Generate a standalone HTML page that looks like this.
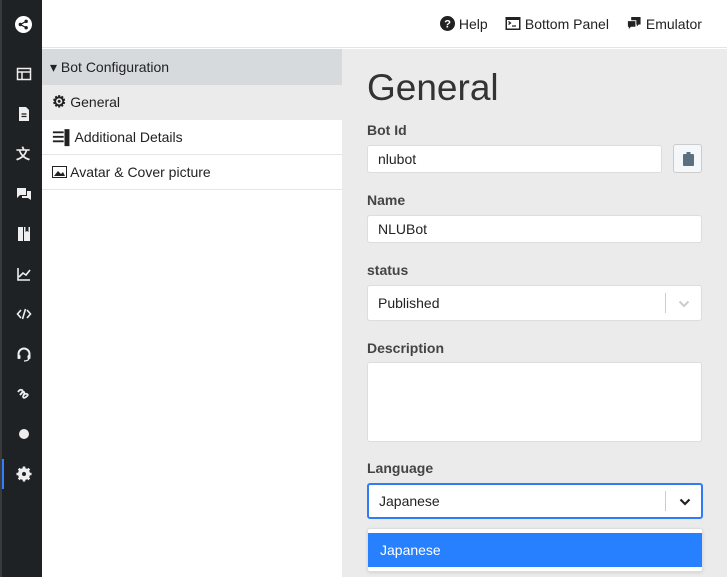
<!DOCTYPE html>
<html><head><style>
*{box-sizing:border-box;margin:0;padding:0}
body{width:727px;height:577px;overflow:hidden;font-family:"Liberation Sans",sans-serif;background:#fff;position:relative;color:#333}
.sb{position:absolute;left:0;top:0;width:42px;height:577px;background:#1f2225;border-left:2px solid #3a3a3a}
.ic{position:absolute;left:14px;width:16px;height:16px;color:#eee}
.top{position:absolute;left:42px;top:0;right:0;height:48px;background:#fff;border-bottom:1px solid #e4e4e4}
.tb{position:absolute;top:16px;font-size:14px;color:#222}
.lp{position:absolute;left:42px;top:49px;width:300px;bottom:0;background:#fff}
.row{height:35px;border-bottom:1px solid #e5e5e5;font-size:14px;line-height:34px;padding-left:10px;color:#222}
.rp{position:absolute;left:342px;top:49px;right:0;bottom:0;background:#ebebeb}
.lab{position:absolute;left:25px;font-size:14px;font-weight:bold;color:#444}
.inp{position:absolute;left:25px;background:#fff;border:1px solid #ddd;border-radius:3px;font-size:14px;padding-left:10px;color:#222}
</style></head><body>
<div class="sb">
<svg class="ic" style="top:16px;left:13px;width:17px;height:17px" viewBox="0 0 16 16"><circle cx="8" cy="8" r="8" fill="#fff"/><circle cx="5" cy="8" r="1.6" fill="#1f2225"/><circle cx="10.5" cy="5" r="1.6" fill="#1f2225"/><circle cx="10.5" cy="11" r="1.6" fill="#1f2225"/><path d="M5 8L10.5 5M5 8l5.5 3" stroke="#1f2225" stroke-width="1.2"/></svg>
<svg class="ic" style="top:66px" viewBox="0 0 16 16"><rect x="1.5" y="2.5" width="13" height="11" fill="none" stroke="#eee" stroke-width="1.5"/><path d="M1.5 6h13M6 6v7.5" stroke="#eee" stroke-width="1.5"/></svg>
<svg class="ic" style="top:106px" viewBox="0 0 16 16"><path d="M3 1h7l3 3v11H3z" fill="#eee"/><path d="M5.5 8h5M5.5 10.5h5" stroke="#1f2225" stroke-width="1.2"/></svg>
<div class="ic" style="top:144px;font-size:14px;font-weight:bold">文</div>
<svg class="ic" style="top:186px" viewBox="0 0 16 16"><path d="M1 2h9v7H4l-3 3z" fill="#eee"/><path d="M11 5h4v9l-3-2H6v-2h5z" fill="#eee"/></svg>
<svg class="ic" style="top:226px" viewBox="0 0 16 16"><rect x="2" y="1" width="5" height="14" fill="#eee"/><rect x="8" y="1" width="6" height="14" fill="#eee"/><path d="M9.5 1v5l1.5-1 1.5 1V1" fill="#1f2225"/></svg>
<svg class="ic" style="top:266px" viewBox="0 0 16 16"><path d="M2 2v12h12M3 11l4-4 3 2 4-5" fill="none" stroke="#eee" stroke-width="1.6"/></svg>
<svg class="ic" style="top:306px" viewBox="0 0 16 16"><path d="M5 4L1.5 8 5 12M11 4l3.5 4L11 12M9.5 3l-3 10" fill="none" stroke="#eee" stroke-width="1.6"/></svg>
<svg class="ic" style="top:346px" viewBox="0 0 16 16"><path d="M2.5 10V8a5.5 5.5 0 0 1 11 0v2" fill="none" stroke="#eee" stroke-width="2"/><rect x="1.5" y="9" width="3" height="4" rx="1" fill="#eee"/><rect x="11.5" y="9" width="3" height="4" rx="1" fill="#eee"/><path d="M13 12q0 3-5 3" fill="none" stroke="#eee" stroke-width="1.3"/></svg>
<svg class="ic" style="top:386px" viewBox="0 0 16 16"><path d="M2 6q2-3 4-2t-2 5q3-4 4-3t-1 4q2-3 4-2t-1 3-3-1" fill="none" stroke="#eee" stroke-width="1.8"/></svg>
<svg class="ic" style="top:426px" viewBox="0 0 16 16"><circle cx="8" cy="8" r="5" fill="#eee"/></svg>
<div style="position:absolute;left:0;top:459px;width:2px;height:30px;background:#2f7fff"></div>
<svg class="ic" style="top:466px" viewBox="0 0 16 16"><circle cx="8" cy="8" r="4.5" fill="none" stroke="#eee" stroke-width="3"/><path d="M8 0.5v15M0.5 8h15M2.7 2.7l10.6 10.6M13.3 2.7L2.7 13.3" stroke="#eee" stroke-width="2.6"/><circle cx="8" cy="8" r="2" fill="#1f2225"/></svg>
</div>
<div class="top">
<span class="tb" style="left:398px"><svg width="15" height="15" viewBox="0 0 16 16" style="vertical-align:-2px"><circle cx="8" cy="8" r="8" fill="#222"/><text x="8" y="12.5" font-size="12" font-weight="bold" fill="#fff" text-anchor="middle" font-family="Liberation Sans">?</text></svg> Help</span>
<span class="tb" style="left:463px"><svg width="16" height="15" viewBox="0 0 16 15" style="vertical-align:-2px"><rect x="0.5" y="1" width="15" height="13" fill="#222"/><rect x="2" y="4" width="12" height="8.5" fill="#fff"/><path d="M3.5 5.5l2 1.5-2 1.5M7 10h4" stroke="#222" stroke-width="1.3" fill="none"/></svg> Bottom Panel</span>
<span class="tb" style="left:584px"><svg width="16" height="15" viewBox="0 0 16 16" style="vertical-align:-2px"><path d="M5 1h10v8h-2l-2 2V9H5z" fill="#222"/><path d="M1 5h9v7H5l-3 3v-3H1z" fill="#222" stroke="#fff" stroke-width="1"/></svg> Emulator</span>
</div>
<div class="lp">
<div class="row" style="background:#d7dadd;line-height:36px;height:36px;border:0;padding-left:8px">▾ Bot Configuration</div>
<div class="row" style="background:#ebebeb;border-bottom:0;padding-left:10px"><span style="font-size:16px;font-weight:bold">⚙</span> General</div>
<div class="row"><span style="font-weight:bold">☰▌</span>Additional Details</div>
<div class="row"><svg width="15" height="12" viewBox="0 0 15 12" style="vertical-align:-1px"><rect x="0.5" y="0.5" width="14" height="11" fill="none" stroke="#222"/><path d="M2 10l4-5 3 3 2-2 2 4z" fill="#222"/></svg> Avatar &amp; Cover picture</div>
</div>
<div class="rp">
<div style="position:absolute;left:25px;top:18px;font-size:37px;color:#333">General</div>
<div class="lab" style="top:73px">Bot Id</div>
<div class="inp" style="top:96px;width:295px;height:28px;line-height:26px">nlubot</div>
<div style="position:absolute;left:331px;top:95px;width:29px;height:29px;background:#f5f8fa;border:1px solid #ccc;border-radius:3px"><svg width="11" height="14" viewBox="0 0 11 14" style="position:absolute;left:9px;top:7px"><rect x="0" y="2" width="11" height="12" rx="1" fill="#5c7080"/><rect x="3.5" y="0" width="4" height="3" fill="#5c7080"/></svg></div>
<div class="lab" style="top:143px">Name</div>
<div class="inp" style="top:166px;width:335px;height:28px;line-height:26px">NLUBot</div>
<div class="lab" style="top:213px">status</div>
<div class="inp" style="top:236px;width:335px;height:36px;line-height:34px">Published<span style="position:absolute;left:297px;top:7px;height:20px;border-left:1px solid #ccc"></span><svg width="12" height="8" viewBox="0 0 12 8" style="position:absolute;left:310px;top:14px"><path d="M1.5 1.5l4.5 4.5 4.5-4.5" fill="none" stroke="#ccc" stroke-width="2"/></svg></div>
<div class="lab" style="top:291px">Description</div>
<div class="inp" style="top:313px;width:335px;height:80px"></div>
<div class="lab" style="top:411px">Language</div>
<div class="inp" style="top:434px;width:336px;height:36px;line-height:32px;border:2px solid #2f7cf6">Japanese<span style="position:absolute;left:296px;top:6px;height:20px;border-left:1px solid #ccc"></span><svg width="12" height="8" viewBox="0 0 12 8" style="position:absolute;left:310px;top:13px"><path d="M1.5 1.5l4.5 4.5 4.5-4.5" fill="none" stroke="#222" stroke-width="2.2"/></svg></div>
<div style="position:absolute;left:25px;top:479px;width:336px;height:44px;background:#fff;border:1px solid #ddd;border-radius:3px;box-shadow:0 1px 3px rgba(0,0,0,.1)"><div style="position:absolute;left:0;right:0;top:4px;height:34px;background:#2680ff;color:#fff;font-size:14px;line-height:34px;padding-left:12px">Japanese</div></div>
</div>
</body></html>
